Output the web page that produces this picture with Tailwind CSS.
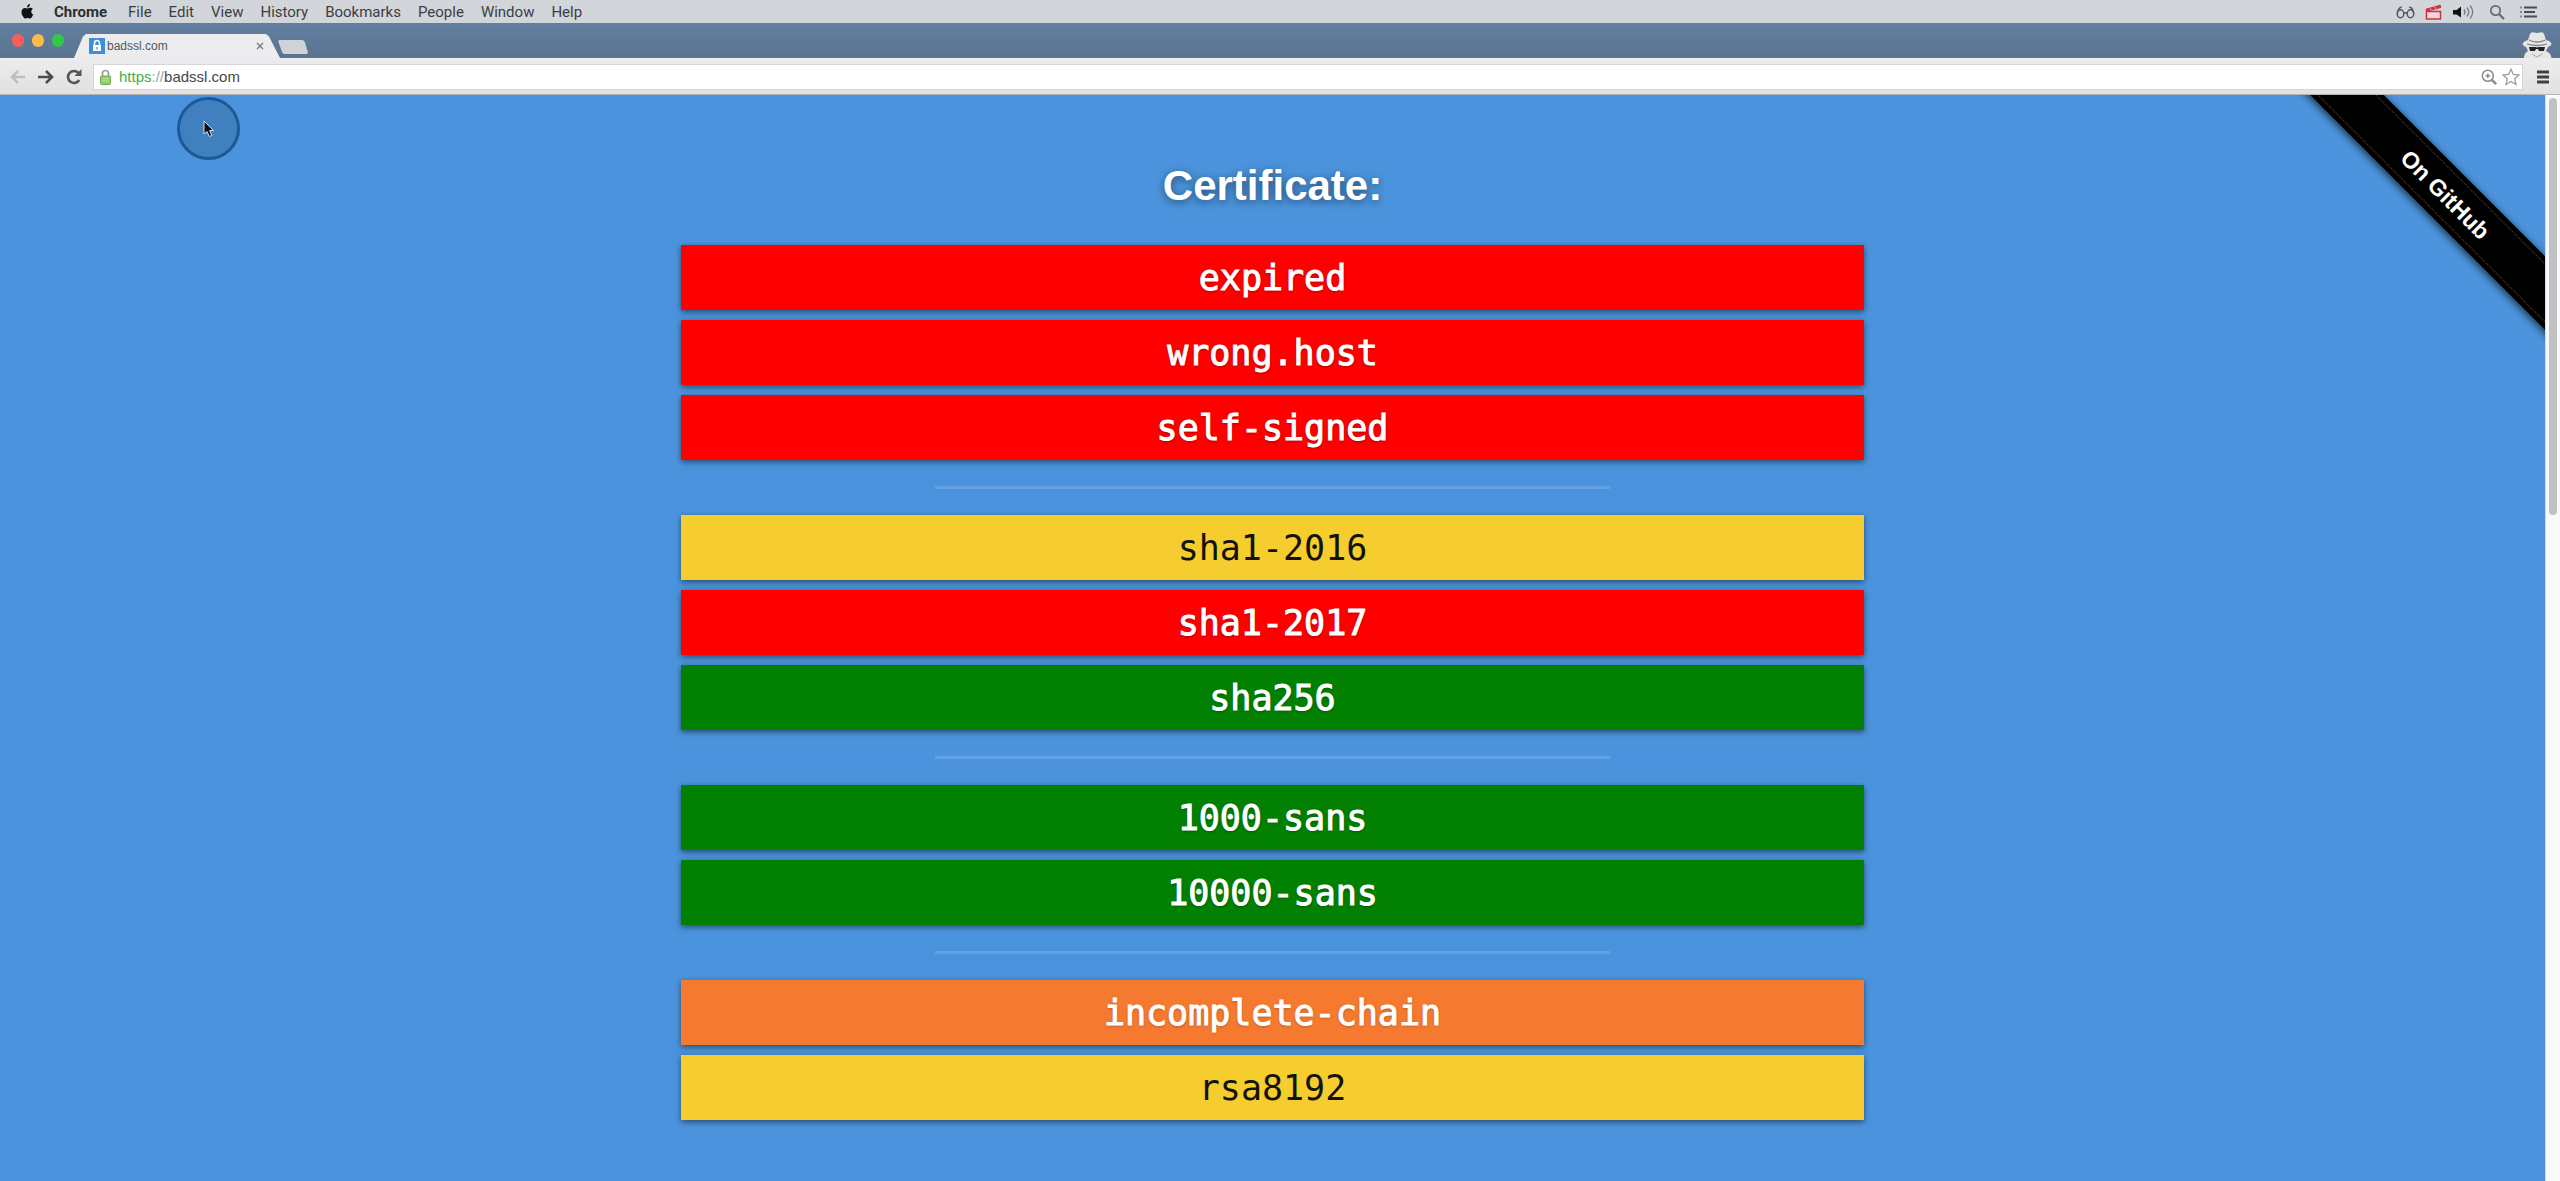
<!DOCTYPE html>
<html lang="en">
<head>
<meta charset="utf-8">
<title>badssl.com</title>
<script src="https://cdn.jsdelivr.net/npm/@tailwindcss/browser@4"></script>
</head>
<body class="flex min-h-screen flex-col bg-[#4b94dd] font-['Liberation_Sans',sans-serif]">

<!-- System menu bar -->
<nav class="flex h-[23px] items-center bg-[#d2d5da] pr-[22px] pl-5 font-[Roboto,sans-serif] text-[15px] leading-5 text-[#3c3e42]" aria-label="Menu bar">
  <a href="#" aria-label="Apple" class="mr-5"><svg class="h-[15px] w-[14px]" viewBox="0 0 14 15" fill="#111"><path d="M9.9 0c.1 1.100-.3 1.900-.8 2.500-.5.600-1.200 1-2 .9-.1-.9.300-1.700.8-2.300C8.400.500 9.200.100 9.900 0zM12.900 5.100c-1.100.7-1.600 1.500-1.600 2.700 0 1.300.7 2.300 1.900 2.800-.3.900-.8 1.800-1.400 2.600-.6.800-1.100 1.300-1.900 1.300-.9 0-1.200-.5-2.300-.5s-1.500.5-2.300.5c-.8 0-1.400-.6-2-1.500C1.900 11.200 1.200 8.800 1.600 7 2 5.100 3.300 3.900 4.900 3.900c1 0 1.700.6 2.500.6s1.500-.7 2.700-.7c1.100 0 2.100.5 2.800 1.300z"/></svg></a>
  <ul class="flex gap-[17px]">
    <li class="mr-1 font-bold text-[#2c2e31]"><a href="#">Chrome</a></li>
    <li><a href="#">File</a></li>
    <li><a href="#">Edit</a></li>
    <li><a href="#">View</a></li>
    <li><a href="#">History</a></li>
    <li><a href="#">Bookmarks</a></li>
    <li><a href="#">People</a></li>
    <li><a href="#">Window</a></li>
    <li><a href="#">Help</a></li>
  </ul>
  <div class="ml-auto flex items-center gap-[10px]">
    <svg class="h-4 w-[19px]" viewBox="0 0 19 16" fill="none" stroke="#55585d" stroke-width="1.500"><ellipse cx="4.500" cy="9.800" rx="3.300" ry="4"/><ellipse cx="14.500" cy="9.800" rx="3.300" ry="4"/><path d="M7.800 9.500q1.700-1.500 3.400 0M1.400 9C2 5.500 4 2.500 5.800 3.500M17.600 9C17 5.500 15 2.500 13.200 3.500"/></svg>
    <svg class="h-4 w-[17px]" viewBox="0 0 17 16" fill="none" stroke="#d3303d"><path d="M1.500 7.500h14v7.500h-14z" fill="#ebd9dd" stroke-width="1.500"/><path d="M1 5.200 15.200 1.200l.7 2.300L1.500 7.300z" fill="#d3303d"/><path d="M5 4.500l1.500 1.200M9.500 3.200 11 4.500" stroke="#f3d0d4"/></svg>
    <svg class="h-4 w-[23px]" viewBox="0 0 23 16" fill="none" stroke="#777b80" stroke-width="1.300"><path d="M1 6h3.500L9 2.500v11L4.500 10.500H1z" fill="#111" stroke="none"/><path d="M12 5.500q2 2.500 0 5M15 3.500q3.500 4.500 0 9M18.200 1.500q5 6.500 0 13"/></svg>
    <svg class="ml-1 h-4 w-4" viewBox="0 0 16 16" fill="none" stroke="#66696e" stroke-width="1.700"><circle cx="6.500" cy="6.500" r="4.700"/><path d="M10 10l5 5" stroke-width="2.200"/></svg>
    <svg class="ml-1 h-4 w-[19px]" viewBox="0 0 19 16" fill="none" stroke="#4a4d51" stroke-width="2"><path d="M5 3.500h13M5 8h11M5 12.500h13"/><path d="M1 3.500h2M1 8h2M1 12.500h2" stroke="#85888c"/></svg>
  </div>
</nav>

<!-- Tab strip -->
<header class="flex h-[35px] items-end bg-linear-to-b from-[#627ea0] to-[#5b7590] pr-2 pl-3">
  <div class="flex gap-2 self-center">
    <button aria-label="Close window" class="h-[13px] w-3 rounded-full bg-[#f95d59]"></button>
    <button aria-label="Minimize window" class="h-[13px] w-3 rounded-full bg-[#fcbb46]"></button>
    <button aria-label="Zoom window" class="h-[13px] w-3 rounded-full bg-[#34c84b]"></button>
  </div>
  <div class="ml-[10px] flex h-[24px] w-[206px] items-center bg-[#ececee] pr-4 pl-[15px] [clip-path:polygon(0_100%,9px_10%,12px_0,192px_0,195px_10%,100%_100%)]">
    <svg class="h-4 w-4" viewBox="0 0 16 16"><path fill="#3d8edb" d="M0 0h16v16H0z"/><path fill="#fff" d="M4 7h8v6H4z"/><path fill="none" stroke="#fff" stroke-width="1.500" d="M5.500 7V5a2.500 2.500 0 0 1 5 0v2"/><path fill="#3d8edb" d="M7.400 9h1.200v2.500H7.400z"/></svg>
    <span class="ml-[2px] text-xs text-[#55565a]">badssl.com</span>
    <button aria-label="Close tab" class="ml-auto"><svg class="h-2 w-2" viewBox="0 0 8 8" stroke="#77787b" stroke-width="1.400"><path d="M1 1l6 6M7 1 1 7"/></svg></button>
  </div>
  <button aria-label="New tab" class="mb-1 -ml-[2px] h-[14px] w-[30px]"><svg class="h-full w-full" viewBox="0 0 30 14"><path fill="#cfd2d6" d="M2 0h22q2 0 2.800 2l3 10q.4 2-1.500 2H6.500q-2 0-2.500-2L.5 2Q0 0 2 0z"/></svg></button>
  <svg class="ml-auto h-[27px] w-[30px]" viewBox="0 0 30 27"><path fill="#e4e5e5" d="M2 27q0-5 4-7l-2-4q-3-1-3.500-3 1-3 5.500-4L8 3q1-2.500 4-1.500l3 .5 3-.5q3-1 4 1.500l2 6q5 1 5.500 4-.5 2-3.500 3l-2 4q5 2 5.500 7z"/><path d="M7 9q8 4 16.500 0M5 13q10 3 20 0" fill="none" stroke="#85878a" stroke-width="1.300"/><path d="M7 16h7l1 .8 1-.8h7l-1 4h-5l-1-2h-2l-1 2H8z" fill="#202224"/><path d="M10 23l5 3 5-3" fill="none" stroke="#a9abad"/></svg>
</header>

<!-- Toolbar -->
<div class="flex h-[37px] items-center border-b border-[#b4b6ba] bg-linear-to-b from-[#ececee] to-[#e2e0e1] pt-px pr-[11px] pl-[10px]">
  <button aria-label="Back"><svg class="h-[14px] w-4" viewBox="0 0 16 14" fill="none" stroke="#bfbfc1" stroke-width="2.500"><path d="M15 7H2.500M8 1 2 7l6 6"/></svg></button>
  <button aria-label="Forward" class="ml-3"><svg class="h-[14px] w-4" viewBox="0 0 16 14" fill="none" stroke="#4c4c4e" stroke-width="2.600"><path d="M0 7h13M8 1l6 6-6 6"/></svg></button>
  <button aria-label="Reload" class="ml-3"><svg class="h-4 w-4" viewBox="0 0 16 16" fill="none" stroke="#555557" stroke-width="2.600"><path d="M13.200 11A6 6 0 1 1 12.500 4"/><path d="M15.500 0v7H8.500z" fill="#555557" stroke="none"/></svg></button>
  <form class="ml-[11px] flex h-[26px] grow items-center border border-[#d5d5d7] bg-white pr-[2px] pl-[6px] text-[15px] leading-5">
    <svg class="mr-2 h-4 w-[11px]" viewBox="0 0 11 16"><path d="M2.500 8V4.500a3 3 0 0 1 6 0V8" fill="none" stroke="#9a9d97" stroke-width="1.700"/><rect x=".5" y="7" width="10" height="8.500" rx="1" fill="#8fce6c" stroke="#6fae50"/><path d="M2 9.500h7M2 12h7" stroke="#b4e29a"/></svg>
    <label for="address" class="text-[#a0a2a5]"><span class="text-[#3fae49]">https</span>://</label>
    <input id="address" type="text" value="badssl.com" class="min-w-0 grow bg-transparent text-[#45464b] outline-none">
    <button type="button" aria-label="Zoom" class="mr-[5px]"><svg class="h-4 w-4" viewBox="0 0 16 16" fill="none" stroke="#8d8e90" stroke-width="1.600"><circle cx="6.800" cy="6.800" r="5.500"/><path d="M4.500 6.800h4.600M6.800 4.500v4.600"/><path d="M11 11l4.200 4.200" stroke-width="2.500"/></svg></button>
    <button type="button" aria-label="Bookmark this page"><svg class="h-[18px] w-[18px]" viewBox="0 0 18 18" fill="none" stroke="#9c9da0" stroke-width="1.300"><path d="M9 1.200l2.300 5.300 5.700.5-4.300 3.800 1.300 5.700-5-3-5 3 1.300-5.700L1 7l5.700-.5z"/></svg></button>
  </form>
  <button aria-label="Chrome menu" class="ml-[14px]"><svg class="h-[14px] w-3" viewBox="0 0 12 14" stroke="#3f3f41" stroke-width="3"><path d="M0 2h12M0 7h12M0 12h12"/></svg></button>
</div>

<!-- Viewport -->
<div class="flex grow">
  <main class="relative grow overflow-hidden pt-[66px] pb-14">
    <h1 class="text-center text-[42px] leading-[50px] font-bold text-white [text-shadow:0_2px_8px_rgba(0,0,0,0.5)]">Certificate:</h1>
    <div class="mx-auto mt-[34px] flex w-[46.5%] flex-col items-center gap-[26px] text-center font-['DejaVu_Sans_Mono',monospace] text-[35px] leading-[63px] text-white">
      <div class="flex w-full flex-col gap-[10px] [-webkit-text-stroke:1px_white]">
        <a href="#" class="bg-[#fe0000] pt-[2px] shadow-[0_2px_6px_rgba(0,0,0,0.5)] [text-shadow:0_1px_3px_rgba(0,0,0,0.4)]">expired</a>
        <a href="#" class="bg-[#fe0000] pt-[2px] shadow-[0_2px_6px_rgba(0,0,0,0.5)] [text-shadow:0_1px_3px_rgba(0,0,0,0.4)]">wrong.host</a>
        <a href="#" class="bg-[#fe0000] pt-[2px] shadow-[0_2px_6px_rgba(0,0,0,0.5)] [text-shadow:0_1px_3px_rgba(0,0,0,0.4)]">self-signed</a>
      </div>
      <hr class="h-[3px] w-[57%] border-0 bg-[#64a2e6]">
      <div class="flex w-full flex-col gap-[10px]">
        <a href="#" class="bg-[#f5cd2f] pt-[2px] text-[#141204] shadow-[0_2px_6px_rgba(0,0,0,0.5)]">sha1-2016</a>
        <a href="#" class="bg-[#fe0000] pt-[2px] shadow-[0_2px_6px_rgba(0,0,0,0.5)] [-webkit-text-stroke:1px_white] [text-shadow:0_1px_3px_rgba(0,0,0,0.4)]">sha1-2017</a>
        <a href="#" class="bg-[#028002] pt-[2px] shadow-[0_2px_6px_rgba(0,0,0,0.5)] [-webkit-text-stroke:1px_white] [text-shadow:0_1px_3px_rgba(0,0,0,0.4)]">sha256</a>
      </div>
      <hr class="h-[3px] w-[57%] border-0 bg-[#64a2e6]">
      <div class="flex w-full flex-col gap-[10px] [-webkit-text-stroke:1px_white]">
        <a href="#" class="bg-[#028002] pt-[2px] shadow-[0_2px_6px_rgba(0,0,0,0.5)] [text-shadow:0_1px_3px_rgba(0,0,0,0.4)]">1000-sans</a>
        <a href="#" class="bg-[#028002] pt-[2px] shadow-[0_2px_6px_rgba(0,0,0,0.5)] [text-shadow:0_1px_3px_rgba(0,0,0,0.4)]">10000-sans</a>
      </div>
      <hr class="h-[3px] w-[57%] border-0 bg-[#64a2e6]">
      <div class="flex w-full flex-col gap-[10px]">
        <a href="#" class="bg-[#f57a30] pt-[2px] shadow-[0_2px_6px_rgba(0,0,0,0.5)] [-webkit-text-stroke:1px_white] [text-shadow:0_1px_3px_rgba(0,0,0,0.3)]">incomplete-chain</a>
        <a href="#" class="bg-[#f5cd2f] pt-[2px] text-[#141204] shadow-[0_2px_6px_rgba(0,0,0,0.5)]">rsa8192</a>
      </div>
    </div>

    <!-- Corner ribbon -->
    <a href="#" class="absolute top-[73px] -right-[101px] flex h-[52px] w-[400px] rotate-45 flex-col justify-center bg-black text-center text-[23px] leading-[38px] font-bold text-white shadow-[0_2px_8px_rgba(0,0,0,0.7)]"><span class="border-y border-dotted border-[#54483a] pt-[2px]">On GitHub</span></a>

    <!-- Pointer highlight -->
    <div class="absolute top-[2px] left-[177px] flex h-[63px] w-[63px] items-center justify-center rounded-full border-[3px] border-[#1c5a97] bg-[#4080bf]">
      <svg class="h-[18px] w-3" viewBox="0 0 12 18"><path d="M1 1v13l3-2.500 2.300 5 2.500-1.100L6.600 10.500h4z" fill="#0c0f14" stroke="#cfe0f2"/></svg>
    </div>
  </main>
  <div class="w-[15px] border-l border-[#d9dde2] bg-[#fafafc] pt-[3px] pr-[3px] pl-[3px]">
    <div class="h-[417px] rounded-full bg-[#c1c1c5]"></div>
  </div>
</div>
</body>
</html>
